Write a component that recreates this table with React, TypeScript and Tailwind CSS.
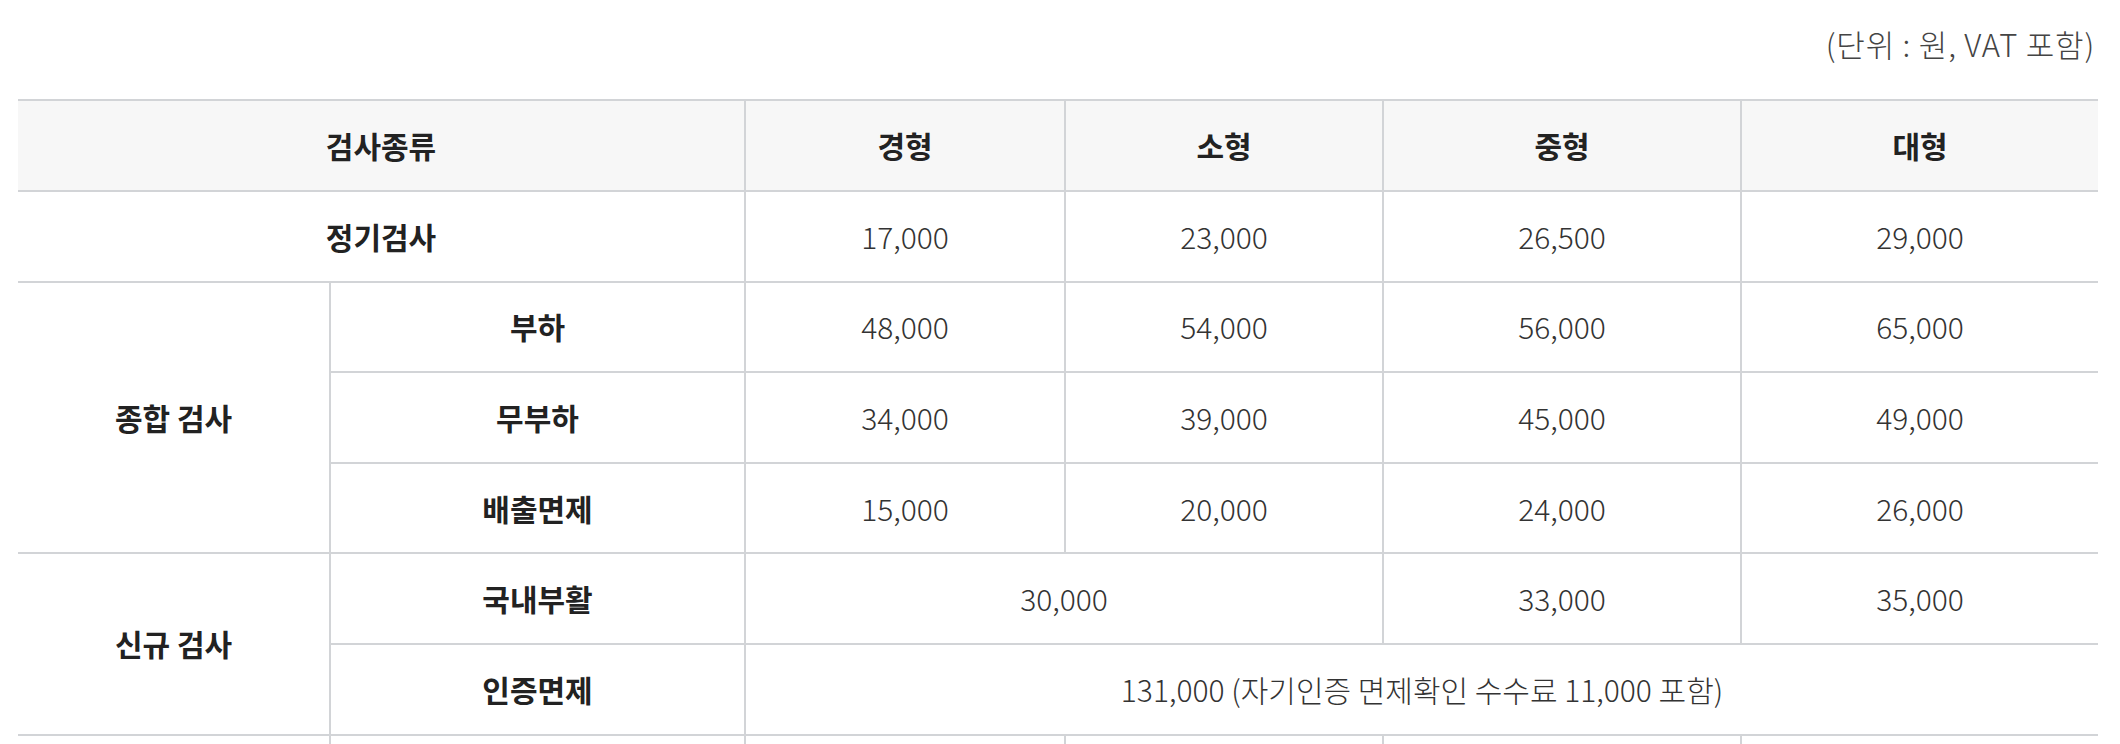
import React from 'react';

const font = { fontFamily: '"Noto Sans CJK KR", "Noto Sans", sans-serif' };

const th = 'border-2 border-[#d2d4d7] bg-[#f7f7f7] text-[30px] font-bold text-[#222] text-center align-middle';
const label = 'border-2 border-[#d2d4d7] text-[30px] font-bold text-[#222] text-center align-middle';
const cell = 'border-2 border-[#d2d4d7] text-[30px] font-light text-[#333] text-center align-middle';

const general = [
  { name: '부하', prices: ['48,000', '54,000', '56,000', '65,000'] },
  { name: '무부하', prices: ['34,000', '39,000', '45,000', '49,000'] },
  { name: '배출면제', prices: ['15,000', '20,000', '24,000', '26,000'] },
];

export default function App() {
  return (
    <div className="bg-white min-h-screen pl-[18px] pr-[22px] pt-[22px]" style={font}>
      <p className="text-right text-[31px] leading-[44px] tracking-[0.8px] text-[#444] font-light pr-[3px] mb-[33px]">
        (단위 : 원, VAT 포함)
      </p>
      <table className="w-full border-collapse table-fixed">
        <colgroup>
          <col className="w-[312px]" />
          <col className="w-[415px]" />
          <col className="w-[320px]" />
          <col className="w-[318px]" />
          <col className="w-[358px]" />
          <col />
        </colgroup>
        <thead>
          <tr className="h-[91px]">
            <th colSpan={2} className={`${th} border-l-0`}>검사종류</th>
            <th className={th}>경형</th>
            <th className={th}>소형</th>
            <th className={th}>중형</th>
            <th className={`${th} border-r-0`}>대형</th>
          </tr>
        </thead>
        <tbody>
          <tr className="h-[90.6px]">
            <td colSpan={2} className={`${label} border-l-0`}>정기검사</td>
            <td className={cell}>17,000</td>
            <td className={cell}>23,000</td>
            <td className={cell}>26,500</td>
            <td className={`${cell} border-r-0`}>29,000</td>
          </tr>
          {general.map((row, i) => (
            <tr key={row.name} className="h-[90.6px]">
              {i === 0 && (
                <td rowSpan={3} className={`${label} border-l-0`}>종합 검사</td>
              )}
              <td className={label}>{row.name}</td>
              {row.prices.map((p, j) => (
                <td key={j} className={j === 3 ? `${cell} border-r-0` : cell}>{p}</td>
              ))}
            </tr>
          ))}
          <tr className="h-[90.6px]">
            <td rowSpan={2} className={`${label} border-l-0`}>신규 검사</td>
            <td className={label}>국내부활</td>
            <td colSpan={2} className={cell}>30,000</td>
            <td className={cell}>33,000</td>
            <td className={`${cell} border-r-0`}>35,000</td>
          </tr>
          <tr className="h-[90.6px]">
            <td className={label}>인증면제</td>
            <td colSpan={4} className={`${cell} border-r-0`}>131,000 (자기인증 면제확인 수수료 11,000 포함)</td>
          </tr>
          <tr className="h-[90.6px]">
            <td className={`${label} border-l-0`}>&nbsp;</td>
            <td className={label}>&nbsp;</td>
            <td className={cell}>&nbsp;</td>
            <td className={cell}>&nbsp;</td>
            <td className={cell}>&nbsp;</td>
            <td className={`${cell} border-r-0`}>&nbsp;</td>
          </tr>
        </tbody>
      </table>
    </div>
  );
}
